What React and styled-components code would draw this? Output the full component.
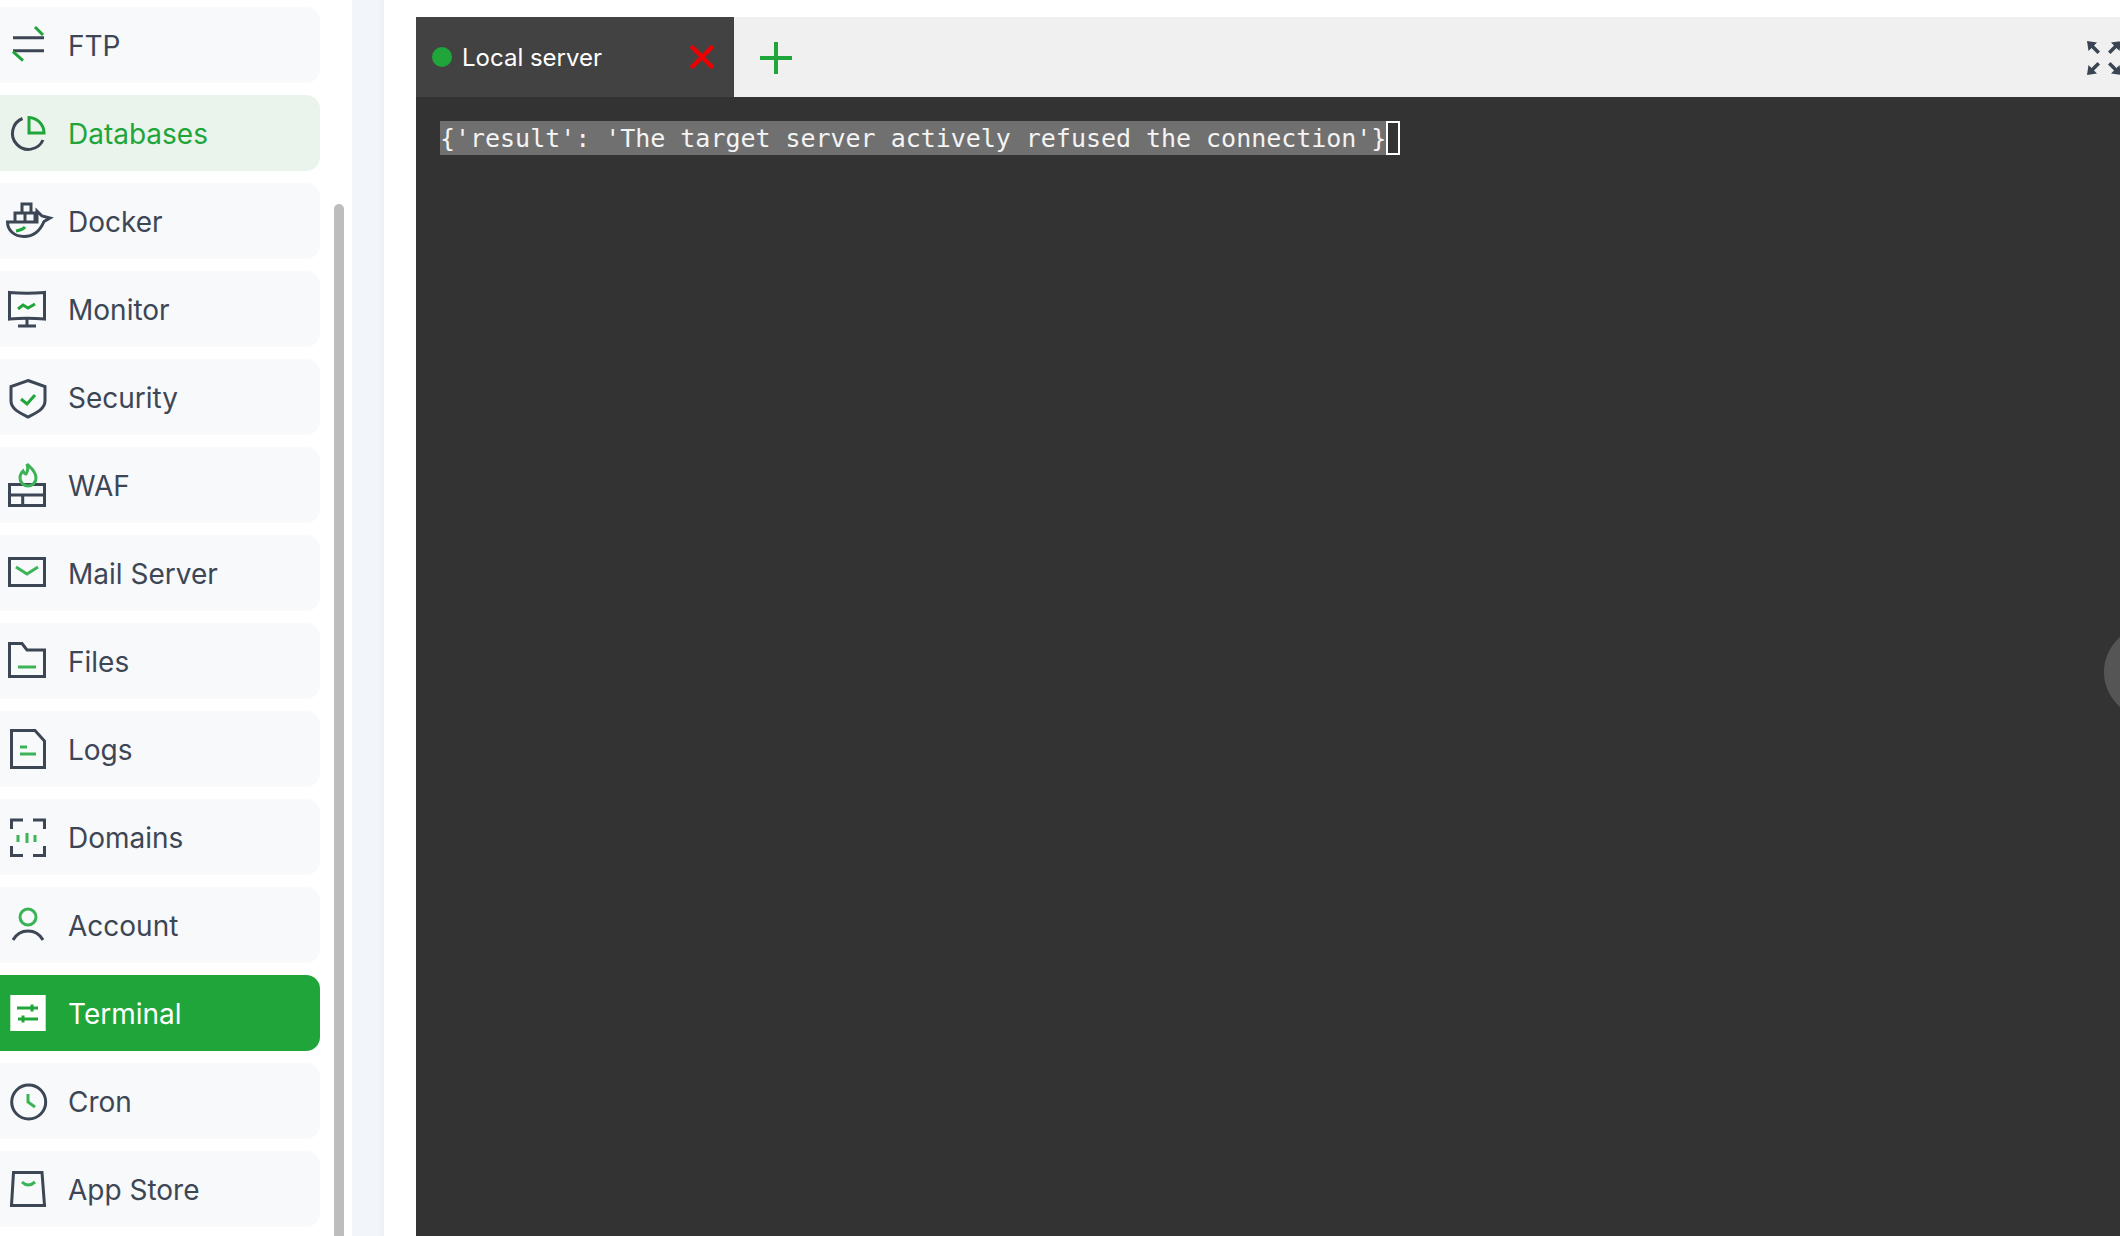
import styled, { createGlobalStyle } from 'styled-components';

const GlobalStyle = createGlobalStyle`
  html, body {
    margin: 0;
    height: 100%;
    overflow: hidden;
    background: #ffffff;
    font-family: "Inter", "Liberation Sans", sans-serif;
  }
  #root {
    height: 100%;
  }
`;

const Page = styled.div`
  display: flex;
  height: 1236px;
  overflow: hidden;
`;

const Sidebar = styled.aside`
  display: flex;
  flex: none;
  width: 352px;
  background: #ffffff;
`;

const Nav = styled.nav`
  display: flex;
  flex-direction: column;
  gap: 12px;
  width: 320px;
  padding-top: 7px;
`;

const Row = styled.a`
  display: flex;
  align-items: center;
  gap: 12px;
  height: 76px;
  flex: none;
  border-radius: 0 14px 14px 0;
  font-size: 28px;
  color: ${(p) => (p.$state === 'selected' ? '#ffffff' : p.$state === 'open' ? '#20a53a' : '#3d4655')};
  background: ${(p) => (p.$state === 'selected' ? '#20a53a' : p.$state === 'open' ? '#eaf4ec' : '#f7f9fb')};
`;

const Label = styled.span`
  margin-top: 2px;
`;

const Glyph = styled.svg`
  flex: none;
  width: 56px;
  height: 56px;
  fill: none;
  stroke: #3d4655;
  stroke-width: 3;

  .g {
    stroke: #20a53a;
  }
  .l {
    stroke: #3cb356;
  }
  .w {
    fill: #ffffff;
    stroke: none;
  }
`;

const ScrollRail = styled.div`
  flex: none;
  width: 10px;
  margin-left: 14px;
  padding-top: 204px;
`;

const ScrollThumb = styled.div`
  height: 1100px;
  border-radius: 5px;
  background: #bdbdbd;
`;

const Gutter = styled.div`
  flex: none;
  width: 32px;
  background: linear-gradient(90deg, #f2f5fa 0%, #f2f5fa 80%, #eceff4 100%);
`;

const Main = styled.main`
  display: flex;
  flex-direction: column;
  flex: 1;
  min-width: 0;
  padding: 17px 0 0 32px;
`;

const TabBar = styled.div`
  display: flex;
  align-items: center;
  flex: none;
  height: 80px;
  background: #f0f0f0;
`;

const Tab = styled.div`
  display: flex;
  align-items: center;
  flex: none;
  box-sizing: border-box;
  width: 318px;
  height: 100%;
  padding-left: 16px;
  padding-right: 20px;
  background: #424242;
  color: #ffffff;
  font-size: 24px;
`;

const Dot = styled.span`
  width: 20px;
  height: 20px;
  margin-right: 10px;
  border-radius: 50%;
  background: #20a53a;
`;

const TabName = styled.span`
  flex: 1;
`;

const AddButton = styled.svg`
  width: 32px;
  height: 32px;
  margin-left: 26px;
  margin-top: 2px;
  stroke: #20a53a;
  stroke-width: 4;
`;

const CloseButton = styled.svg`
  width: 24px;
  height: 24px;
  stroke: #ee0000;
  stroke-width: 4.4;
  stroke-linecap: round;
`;

const FullScreen = styled.svg`
  width: 34px;
  height: 34px;
  margin-left: auto;
  margin-right: -1px;
  margin-top: 2px;
  fill: #3a4452;
`;

const Terminal = styled.div`
  position: relative;
  flex: 1;
  padding: 24px;
  overflow: hidden;
  background: #333333;
`;

const Line = styled.div`
  display: flex;
  height: 34px;
  font-family: "DejaVu Sans Mono", "Liberation Mono", monospace;
  font-size: 25px;
  letter-spacing: -0.03px;
  color: #f4f4f4;
`;

const Selected = styled.span`
  box-sizing: border-box;
  height: 34px;
  padding-top: 2px;
  line-height: 32px;
  background: #707070;
  white-space: pre;
`;

const Cursor = styled.span`
  box-sizing: border-box;
  width: 14px;
  height: 34px;
  border: 2px solid #ffffff;
`;

const SideHandle = styled.div`
  position: absolute;
  top: 529px;
  right: -76px;
  width: 92px;
  height: 92px;
  border-radius: 50%;
  background: #555555;
`;

const icons = {
  ftp: (
    <>
      <path d="M13 20.7H44M13 33.7H44" />
      <path className="g" d="M43 18L35 10M13 34.7L23 43.7" />
    </>
  ),
  databases: (
    <>
      <path d="M22.5 13.5A16 16 0 1 0 43 35" />
      <path className="g" d="M29 12.5V28H44A15.5 15.5 0 0 0 29 12.5Z" />
    </>
  ),
  docker: (
    <>
      <path d="M7.5 29H37V18L42 23L50 25L44 28.5C40 38 33 43.5 24 43.5C14 43.5 7.5 37 7.5 29Z" />
      <path d="M22 20V11H31V20M15 29V20H35V29M25 20V29" />
      <path className="g" d="M16 38C19 37.5 23 36.5 25 34" />
    </>
  ),
  monitor: (
    <>
      <path d="M9.5 11.5Q27 13 44.5 11.5V38Q27 36.5 9.5 38Z" />
      <path d="M27 38V45M18 45H36" />
      <path className="g" d="M18 28L23 24L28 27L35 23" />
    </>
  ),
  security: (
    <>
      <path d="M28 11.5L45 17.5V32C45 40 36 44 28 48C20 44 11 40 11 32V17.5Z" />
      <path className="g" d="M21 30L27 35L35 26" />
    </>
  ),
  waf: (
    <>
      <path d="M9.5 27.5H44.5V48.5H9.5ZM9.5 38H44.5M22.7 38V48.5" />
      <path className="l" d="M27 7C30 10 36 14 36 21A8 8 0 0 1 20 21C20 18 21 16 23 14C24 16 25 17 26 17C28 14 28 10 27 7Z" />
    </>
  ),
  mail: (
    <>
      <path d="M9.5 13.5H44.5V40.5H9.5Z" />
      <path className="l" d="M16 22L27 29L38 22" />
    </>
  ),
  files: (
    <>
      <path d="M9.5 10.5H22L27 17H44.5V43.5H9.5Z" />
      <path className="l" d="M18 34H36" />
    </>
  ),
  logs: (
    <>
      <path d="M11.5 9.5H35L44.5 20V46.5H11.5Z" />
      <path className="l" d="M20 26H27M20 33H36" />
    </>
  ),
  domains: (
    <>
      <path d="M11.5 20V11H23M33 11H44.5V20M11.5 37V46.5H23M33 46.5H44.5V37" />
      <path className="l" d="M18 26V33M27 24V34M35 26V33" />
    </>
  ),
  account: (
    <>
      <circle className="l" cx="28" cy="20" r="8" />
      <path d="M13 43C17 36 22 34 28 34C34 34 39 36 43 43" />
    </>
  ),
  terminal: (
    <>
      <path className="w" d="M10.3 10H45.7V46H10.3Z" />
      <path className="g" d="M17 23H38M32 19.5V26.5M18 34H38M23 30.5V37.5" />
    </>
  ),
  cron: (
    <>
      <circle cx="28.7" cy="29" r="17" />
      <path className="l" d="M28 21V29L35 34" />
    </>
  ),
  store: (
    <>
      <path d="M13.5 11.5H42L44.5 44.5H11.5Z" />
      <path className="l" d="M22 21Q28 27 35 21" />
    </>
  ),
};

const items = [
  { key: 'ftp', label: 'FTP' },
  { key: 'databases', label: 'Databases', state: 'open' },
  { key: 'docker', label: 'Docker' },
  { key: 'monitor', label: 'Monitor' },
  { key: 'security', label: 'Security' },
  { key: 'waf', label: 'WAF' },
  { key: 'mail', label: 'Mail Server' },
  { key: 'files', label: 'Files' },
  { key: 'logs', label: 'Logs' },
  { key: 'domains', label: 'Domains' },
  { key: 'account', label: 'Account' },
  { key: 'terminal', label: 'Terminal', state: 'selected' },
  { key: 'cron', label: 'Cron' },
  { key: 'store', label: 'App Store' },
];

function App() {
  return (
    <Page>
      <GlobalStyle />
      <Sidebar>
        <Nav>
          {items.map((item) => (
            <Row key={item.key} $state={item.state}>
              <Glyph viewBox="0 0 56 56">{icons[item.key]}</Glyph>
              <Label>{item.label}</Label>
            </Row>
          ))}
        </Nav>
        <ScrollRail>
          <ScrollThumb />
        </ScrollRail>
      </Sidebar>
      <Gutter />
      <Main>
        <TabBar>
          <Tab>
            <Dot />
            <TabName>Local server</TabName>
            <CloseButton viewBox="0 0 24 24">
              <path d="M2.5 2.5L21.5 21.5M21.5 2.5L2.5 21.5" />
            </CloseButton>
          </Tab>
          <AddButton viewBox="0 0 32 32">
            <path d="M16 0V32M0 16H32" />
          </AddButton>
          <FullScreen viewBox="0 0 34 34">
            <path d="M0 0L10 1.5L7 4.5L13 10.5L10.5 13L4.5 7L1.5 10Z" />
            <path d="M34 0L24 1.5L27 4.5L21 10.5L23.5 13L29.5 7L32.5 10Z" />
            <path d="M0 34L10 32.5L7 29.5L13 23.5L10.5 21L4.5 27L1.5 24Z" />
            <path d="M34 34L24 32.5L27 29.5L21 23.5L23.5 21L29.5 27L32.5 24Z" />
          </FullScreen>
        </TabBar>
        <Terminal>
          <Line>
            <Selected>{"{'result': 'The target server actively refused the connection'}"}</Selected>
            <Cursor />
          </Line>
          <SideHandle />
        </Terminal>
      </Main>
    </Page>
  );
}

export default App;
